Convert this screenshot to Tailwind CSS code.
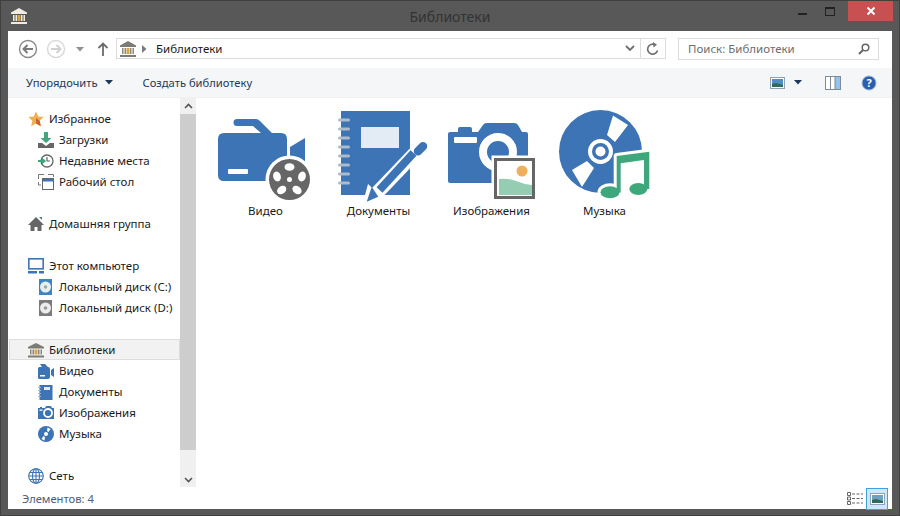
<!DOCTYPE html>
<html><head><meta charset="utf-8"><script src="https://cdn.jsdelivr.net/npm/@tailwindcss/browser@4"></script></head>
<body class="m-0 overflow-hidden">
<div class="w-[900px] h-[516px] bg-[#585858] border border-[#404040] flex flex-col font-['Noto_Sans',sans-serif] text-[11.5px] text-[#1a1a1a] leading-none">
  <!-- title bar -->
  <div class="h-[30px] flex shrink-0">
    <div class="w-[110px] flex pl-[9px] pt-[6px]">
      <svg width="18" height="18" viewBox="0 0 18 18"><path d="M9 1 1 5.500V7h16V5.500z" fill="#f0ece0"/><path d="M3 8h1.500v6H3zM5.500 8H7v6H5.500zM11 8h1.500v6H11zM13.500 8H15v6h-1.500z" fill="#f0ece0"/><rect x="7.500" y="8" width="3" height="6" fill="#d9a441"/><rect x="1" y="15" width="16" height="2" fill="#f0ece0"/></svg>
    </div>
    <div class="flex-1 text-center text-[14px] text-[#333] pt-[9px]">Библиотеки</div>
    <div class="w-[110px] flex justify-end h-[20px] pr-[6px]">
      <div class="w-[27px] flex justify-center pt-[12px] mr-[2px]"><div class="w-[9px] h-[2px] bg-[#222]"></div></div>
      <div class="w-[24px] flex justify-center pt-[6px] mr-[6px]"><div class="w-[10px] h-[9px] border border-[#222] border-t-2"></div></div>
      <div class="w-[45px] h-[20px] bg-[#c75050] flex items-center justify-center"><svg width="10" height="10" viewBox="0 0 10 10"><path d="M1.500 1.500l7 7M8.500 1.500l-7 7" stroke="#fff" stroke-width="2"/></svg></div>
    </div>
  </div>
  <!-- client -->
  <div class="mx-[7px] flex-1 bg-white flex flex-col min-h-0 mb-[6px]">
    <!-- nav -->
    <div class="h-[37px] shrink-0 flex items-start pt-[7px] pl-[10px]">
      <svg width="20" height="20" viewBox="0 0 20 20" class="mt-px"><circle cx="10" cy="10" r="8.500" fill="#fff" stroke="#8a8a8a" stroke-width="1.400"/><path d="M15 10H6M9.500 6 5.500 10l4 4" fill="none" stroke="#7a7a7a" stroke-width="2"/></svg>
      <svg width="20" height="20" viewBox="0 0 20 20" class="mt-px ml-[8px]"><circle cx="10" cy="10" r="8.500" fill="#fff" stroke="#d8d8d8" stroke-width="1.400"/><path d="M5 10h9M10.500 6l4 4-4 4" fill="none" stroke="#d0d0d0" stroke-width="2"/></svg>
      <svg width="8" height="5" viewBox="0 0 8 5" class="mt-[9px] ml-[10px]"><path d="M0 0h8L4 4.500z" fill="#8f8f8f"/></svg>
      <svg width="12" height="14" viewBox="0 0 12 14" class="mt-[4px] ml-[13px]"><path d="M6 14V2M1.500 6 6 1.500 10.500 6" fill="none" stroke="#6b6b6b" stroke-width="1.800"/></svg>
      <div class="ml-[7px] w-[550px] h-[21px] border border-[#dcdcdc] flex items-center">
        <svg width="18" height="18" viewBox="0 0 18 18" class="ml-[2px]"><path d="M9 1 1 5.500V7h16V5.500z" fill="#7d7a72"/><path d="M3 8h1.500v6H3zM5.500 8H7v6H5.500zM11 8h1.500v6H11zM13.500 8H15v6h-1.500z" fill="#8a877f"/><rect x="7.500" y="8" width="3" height="6" fill="#d9a441"/><rect x="1" y="15" width="16" height="2" fill="#7d7a72"/></svg>
        <svg width="5" height="8" viewBox="0 0 5 8" class="ml-[5px]"><path d="M0 0l4.500 4L0 8z" fill="#7a7a7a"/></svg>
        <span class="ml-[9px]">Библиотеки</span>
        <div class="flex-1"></div>
        <svg width="10" height="7" viewBox="0 0 10 7" class="mr-[5px]"><path d="M1 1l4 4 4-4" fill="none" stroke="#6f6f6f" stroke-width="1.800"/></svg>
        <div class="w-[25px] h-full border-l border-[#dcdcdc] flex items-center justify-center">
          <svg width="14" height="14" viewBox="0 0 14 14"><path d="M11.500 8.500A5 5 0 1 1 8.500 2.500" fill="none" stroke="#6f6f6f" stroke-width="1.600"/><path d="M7 0l4 2.700L7.500 5.500z" fill="#6f6f6f"/></svg>
        </div>
      </div>
      <div class="ml-[12px] w-[201px] h-[22px] border border-[#dcdcdc] flex items-center pl-[9px] pr-[8px] text-[#6d6d6d]">
        <span>Поиск: Библиотеки</span><div class="flex-1"></div>
        <svg width="12" height="12" viewBox="0 0 12 12"><circle cx="7.500" cy="4.500" r="3.300" fill="none" stroke="#666" stroke-width="1.500"/><path d="M5 7 1 11" stroke="#666" stroke-width="2"/></svg>
      </div>
    </div>
    <!-- toolbar -->
    <div class="h-[30px] shrink-0 bg-[#f5f6f7] border-b border-[#f0f0f0] flex items-center pl-[18px] text-[#1e395b] text-[11.2px]">
      <span>Упорядочить</span>
      <svg width="8" height="5" viewBox="0 0 8 5" class="ml-[7px]"><path d="M0 0h8L4 4.500z" fill="#1e395b"/></svg>
      <span class="ml-[30px]">Создать библиотеку</span>
      <div class="flex-1"></div>
      <svg width="15" height="12" viewBox="0 0 15 12"><rect x=".5" y=".5" width="14" height="11" fill="#fff" stroke="#8fa3b5"/><rect x="2" y="2" width="11" height="8" fill="#4f8fc7"/><path d="M2 10V7l4-1 7 2v2z" fill="#2f6b5a"/></svg>
      <svg width="8" height="5" viewBox="0 0 8 5" class="ml-[9px]"><path d="M0 0h8L4 4.500z" fill="#1e395b"/></svg>
      <svg width="16" height="14" viewBox="0 0 16 14" class="ml-[23px]"><rect x=".5" y=".5" width="15" height="13" fill="#fff" stroke="#7f8b96"/><rect x="10" y="1" width="5" height="12" fill="#8fc3f2"/><path d="M5.500 1v12M10 1v12" stroke="#7f8b96"/></svg>
      <svg width="16" height="16" viewBox="0 0 16 16" class="ml-[20px] mr-[15px]"><circle cx="8" cy="8" r="7" fill="#2a5fb0" stroke="#9db4d6"/><text x="8" y="12" text-anchor="middle" font-family="Noto Sans" font-weight="700" font-size="11" fill="#fff">?</text></svg>
    </div>
    <!-- body -->
    <div class="flex-1 flex min-h-0">
      <!-- nav pane -->
      <div class="w-[188px] shrink-0 flex">
        <div class="w-[172px] pt-[10px]">
          <div class="h-[21px] pl-[20px] flex items-center gap-[5px]"><svg width="16" height="16" viewBox="0 0 16 16"><path d="M8 .5l2.300 5 5.400.6-4 3.700 1.100 5.400L8 12.500l-4.800 2.700 1.100-5.400-4-3.700 5.400-.6z" fill="#f0b050"/><path d="M8 12.500l4.800 2.700-1.100-5.400L8 7z" fill="#c9622e"/></svg><span>Избранное</span></div>
          <div class="h-[21px] pl-[30px] flex items-center gap-[5px]"><svg width="16" height="16" viewBox="0 0 16 16"><path d="M6 0h4v6h3.500L8 11 2.500 6H6z" fill="#3fa77c"/><path d="M0 11h4l4 3 4-3h4v5H0z" fill="#666"/></svg><span>Загрузки</span></div>
          <div class="h-[21px] pl-[30px] flex items-center gap-[5px]"><svg width="16" height="16" viewBox="0 0 16 16"><circle cx="9" cy="8" r="6" fill="#fff" stroke="#666" stroke-width="1.300"/><path d="M9 4v4h3" fill="none" stroke="#666" stroke-width="1.200"/><path d="M0 7h4V4.500L8 8l-4 3.500V9H0z" fill="#3fa77c"/></svg><span>Недавние места</span></div>
          <div class="h-[21px] pl-[30px] flex items-center gap-[5px]"><svg width="16" height="16" viewBox="0 0 16 16"><path d="M.5 5V.5H6M10 .5h5.500V3M.5 8v3H3" fill="none" stroke="#777"/><rect x="4.500" y="4.500" width="11" height="11" fill="#fff" stroke="#666"/><rect x="5" y="5" width="10" height="2.500" fill="#3d74b5"/></svg><span>Рабочий стол</span></div>
          <div class="h-[21px]"></div>
          <div class="h-[21px] pl-[20px] flex items-center gap-[5px]"><svg width="16" height="16" viewBox="0 0 16 16"><path d="M8 1 0 9h2.500v6h4v-4h3v4h4V9H16z" fill="#666"/><path d="M11 1h3v3z" fill="#3d74b5"/></svg><span>Домашняя группа</span></div>
          <div class="h-[21px]"></div>
          <div class="h-[21px] pl-[20px] flex items-center gap-[5px]"><svg width="16" height="16" viewBox="0 0 16 16"><rect x=".8" y=".8" width="14.400" height="10" fill="#fff" stroke="#3d74b5" stroke-width="1.600"/><path d="M0 13h9v2.500H0zM11 13h5v2.500h-5z" fill="#3d74b5"/></svg><span>Этот компьютер</span></div>
          <div class="h-[21px] pl-[30px] flex items-center gap-[5px]"><svg width="16" height="16" viewBox="0 0 16 16"><rect x="1" y="0" width="13" height="16" fill="#3d84c6"/><circle cx="7.500" cy="8" r="5.500" fill="#e8edf2"/><circle cx="7.500" cy="8" r="1.800" fill="#9aa"/></svg><span>Локальный диск (C:)</span></div>
          <div class="h-[21px] pl-[30px] flex items-center gap-[5px]"><svg width="16" height="16" viewBox="0 0 16 16"><rect x="1" y="0" width="13" height="16" fill="#7b7b7b"/><circle cx="7.500" cy="8" r="5.500" fill="#ececec"/><circle cx="7.500" cy="8" r="1.800" fill="#999"/></svg><span>Локальный диск (D:)</span></div>
          <div class="h-[21px]"></div>
          <div class="h-[21px] pl-[18px] flex items-center gap-[5px] bg-[#f2f2f2] border border-[#dedede] ml-px w-[171px]"><svg width="16" height="16" viewBox="0 0 16 16"><path d="M8 1 0 5v1.500h16V5z" fill="#7d7a72"/><path d="M2 7.500h1.500v5H2zM4.500 7.500H6v5H4.500zM10 7.500h1.500v5H10zM12.500 7.500H14v5h-1.500z" fill="#8a877f"/><rect x="6.500" y="7.500" width="3" height="5" fill="#d9a441"/><rect x="0" y="13.500" width="16" height="2" fill="#7d7a72"/></svg><span>Библиотеки</span></div>
          <div class="h-[21px] pl-[30px] flex items-center gap-[5px]"><svg width="16" height="16" viewBox="0 0 16 16"><path d="M1.500 4H10a2 2 0 0 1 2 2v8a2 2 0 0 1-2 2H1.500A1.500 1.500 0 0 1 0 14.500v-9A1.500 1.500 0 0 1 1.500 4zM2 1h5l3 3H4zM13 7l3-2v9l-3-2z" fill="#3d74b5"/><rect x="2" y="12" width="5" height="1.500" fill="#fff"/></svg><span>Видео</span></div>
          <div class="h-[21px] pl-[30px] flex items-center gap-[5px]"><svg width="16" height="16" viewBox="0 0 16 16"><rect x="1.500" y="1" width="13" height="15" fill="#3d74b5"/><path d="M0 3h3v1H0zM0 6h3v1H0zM0 9h3v1H0zM0 12h3v1H0z" fill="#a8b8c8"/><rect x="6" y="3" width="6" height="3" fill="#e3ecf5"/></svg><span>Документы</span></div>
          <div class="h-[21px] pl-[30px] flex items-center gap-[5px]"><svg width="16" height="16" viewBox="0 0 16 16"><path d="M0 3h2V2h2v1h3l1-2h5l1 2h2v11H0z" fill="#3d74b5"/><circle cx="10" cy="8" r="4" fill="#3d74b5" stroke="#fff" stroke-width="1.800"/><rect x="1.500" y="4.500" width="3" height="1.300" fill="#fff"/></svg><span>Изображения</span></div>
          <div class="h-[21px] pl-[30px] flex items-center gap-[5px]"><svg width="16" height="16" viewBox="0 0 16 16"><circle cx="8" cy="8" r="8" fill="#3d74b5"/><path d="M9.500 1.500l3 1.500-2 3-1.500-1zM6.500 14.500l-3-1.500 2-3 1.500 1z" fill="#fff"/><circle cx="8" cy="8" r="2" fill="#fff"/></svg><span>Музыка</span></div>
          <div class="h-[21px]"></div>
          <div class="h-[21px] pl-[20px] flex items-center gap-[5px]"><svg width="16" height="16" viewBox="0 0 16 16" fill="none" stroke="#3d74b5" stroke-width="1.100"><circle cx="8" cy="8" r="7.300"/><ellipse cx="8" cy="8" rx="3.500" ry="7.300"/><path d="M.7 8h14.600M8 .7v14.600M1.800 4.500h12.400M1.800 11.500h12.400"/></svg><span>Сеть</span></div>
        </div>
        <!-- scrollbar -->
        <div class="w-[16px] h-[389px] bg-[#f0f0f0] flex flex-col">
          <div class="h-[16px] flex items-center justify-center"><svg width="9" height="6" viewBox="0 0 9 6"><path d="M1 5l3.500-3.500L8 5" fill="none" stroke="#555" stroke-width="1.600"/></svg></div>
          <div class="h-[336px] bg-[#cdcdcd]"></div>
          <div class="flex-1 flex items-end justify-center pb-[4px]"><svg width="9" height="6" viewBox="0 0 9 6"><path d="M1 1l3.500 3.500L8 1" fill="none" stroke="#555" stroke-width="1.600"/></svg></div>
        </div>
      </div>
      <!-- content -->
      <div class="flex-1 pl-[13px] pt-[5px] flex items-start text-center text-[#1a1a1a]">
        <!-- Видео -->
        <div class="w-[113px]">
          <svg width="113" height="100" viewBox="209 103 113 100" class="block">
            <path d="M237 119h19q2 0 4 2l12 12h9q6 0 6 6v36q0 6-6 6h-57q-6 0-6-6v-36q0-6 6-6h37l-8-7h-16a3.500 3.500 0 0 1 0-7z" fill="#3d74b5"/>
            <path d="M290 147l15-9v28l-15-6z" fill="#3d74b5"/>
            <circle cx="289.500" cy="179.500" r="24" fill="#fff"/>
            <circle cx="289.500" cy="179.500" r="20.500" fill="#666"/>
            <g fill="#fff"><ellipse cx="289.500" cy="167" rx="5" ry="3.800"/><ellipse cx="277" cy="176.500" rx="5" ry="3.800" transform="rotate(72 277 176.500)"/><ellipse cx="302" cy="176.500" rx="5" ry="3.800" transform="rotate(-72 302 176.500)"/><ellipse cx="281.700" cy="190" rx="5" ry="3.800" transform="rotate(-36 281.700 190)"/><ellipse cx="297" cy="190" rx="5" ry="3.800" transform="rotate(36 297 190)"/><circle cx="289.500" cy="179.500" r="2.500"/></g>
            <rect x="228" y="169" width="20" height="5" rx="1" fill="#fff"/>
          </svg>
          <div class="h-[16px] leading-[16px]">Видео</div>
        </div>
        <!-- Документы -->
        <div class="w-[113px]">
          <svg width="113" height="100" viewBox="322 103 113 100" class="block">
            <rect x="341" y="111" width="69" height="84" fill="#3d74b5"/>
            <g fill="#aebbc9"><rect x="338" y="118.500" width="12" height="3" rx="1.500"/><rect x="338" y="127.500" width="12" height="3" rx="1.500"/><rect x="338" y="136.500" width="12" height="3" rx="1.500"/><rect x="338" y="145.500" width="12" height="3" rx="1.500"/><rect x="338" y="154.500" width="12" height="3" rx="1.500"/><rect x="338" y="163.500" width="12" height="3" rx="1.500"/><rect x="338" y="172.500" width="12" height="3" rx="1.500"/><rect x="338" y="181.500" width="12" height="3" rx="1.500"/></g>
            <rect x="361" y="127" width="38" height="21" fill="#e3ecf5"/>
            <path d="M374 196 418 150" stroke="#fff" stroke-width="14"/>
            <path d="M362 206l6-22 14 13z" fill="#fff"/>
            <path d="M379.500 190 413.500 153" stroke="#3d74b5" stroke-width="8"/>
            <path d="M366.700 201.700l5-15 6.600 10z" fill="#3d74b5"/>
            <path d="M418 151.300 423 146.300" stroke="#3d74b5" stroke-width="8.500" stroke-linecap="round"/>
          </svg>
          <div class="h-[16px] leading-[16px]">Документы</div>
        </div>
        <!-- Изображения -->
        <div class="w-[113px]">
          <svg width="113" height="100" viewBox="435 103 113 100" class="block">
            <path d="M448 132h10v-3q0-2 2-2h10q2 0 2 2v3h6l5-7q1-2 4-2h27q3 0 4 2l4 7h4q2 0 2 2v47q0 2-2 2h-76q-2 0-2-2v-47q0-2 2-2z" fill="#3d74b5"/>
            <rect x="454" y="137" width="23" height="6" rx="1" fill="#fff"/>
            <circle cx="498" cy="152" r="15" fill="#3d74b5" stroke="#fff" stroke-width="8"/>
            <rect x="491.500" y="155.500" width="46" height="46" fill="#fff"/>
            <rect x="495.500" y="159.500" width="38" height="38" fill="#fff" stroke="#666" stroke-width="3"/>
            <circle cx="522" cy="171" r="5.500" fill="#eeb05c"/>
            <path d="M499 179q10-1 17 2t16 4v10h-33z" fill="#95cdb3"/>
          </svg>
          <div class="h-[16px] leading-[16px]">Изображения</div>
        </div>
        <!-- Музыка -->
        <div class="w-[113px]">
          <svg width="113" height="100" viewBox="548 103 113 100" class="block">
            <circle cx="600.500" cy="151.500" r="41.500" fill="#3d74b5"/>
            <path d="M613 115.500 628 125 615 142 607 135z" fill="#fff"/>
            <path d="M572 170 587 161 594 168 582 187z" fill="#fff"/>
            <circle cx="600.500" cy="151.500" r="12.500" fill="#fff"/>
            <circle cx="600.500" cy="151.500" r="8.500" fill="#3d74b5"/>
            <circle cx="600.500" cy="151.500" r="5" fill="#fff"/>
            <g fill="#fff" stroke="#fff" stroke-width="6" stroke-linejoin="round"><path d="M616.700 156 649.300 151.700V189H616.700z"/><ellipse cx="610" cy="192.300" rx="9.500" ry="6"/><ellipse cx="638.300" cy="189" rx="9" ry="6"/></g>
            <g fill="#3fa77c"><path d="M616.700 156 649.300 151.700V189H644V160L620.700 163.300V192.500H616.700z"/><ellipse cx="610" cy="192.300" rx="9.500" ry="6"/><ellipse cx="638.300" cy="189" rx="9" ry="6"/></g>
          </svg>
          <div class="h-[16px] leading-[16px]">Музыка</div>
        </div>
      </div>
    </div>
    <!-- status -->
    <div class="h-[21px] shrink-0 flex items-center pl-[14px] pr-[4px] text-[#4c607a] text-[11.2px]">
      <span>Элементов: 4</span>
      <div class="flex-1"></div>
      <svg width="16" height="13" viewBox="0 0 16 13" class="mr-[3px]"><path d="M.5.500h3v3h-3zM.5 5h3v3h-3zM.5 9.500h3v3h-3z" fill="none" stroke="#666"/><path d="M5 2h3M9.500 2h3M14 2h2M5 6.500h3M9.500 6.500h3M14 6.500h2M5 11h3M9.500 11h3M14 11h2" stroke="#666"/></svg>
      <div class="w-[22px] h-[22px] bg-[#cce8ff] border border-[#3ca4d8] flex items-center justify-center"><svg width="15" height="12" viewBox="0 0 15 12"><rect x=".5" y=".5" width="14" height="11" fill="#fff" stroke="#8fa3b5"/><rect x="2" y="2" width="11" height="8" fill="#6fa0c0"/><path d="M2 10V7l4-1 7 2v2z" fill="#2f6b5a"/></svg></div>
    </div>
  </div>
</div>
</body></html>
